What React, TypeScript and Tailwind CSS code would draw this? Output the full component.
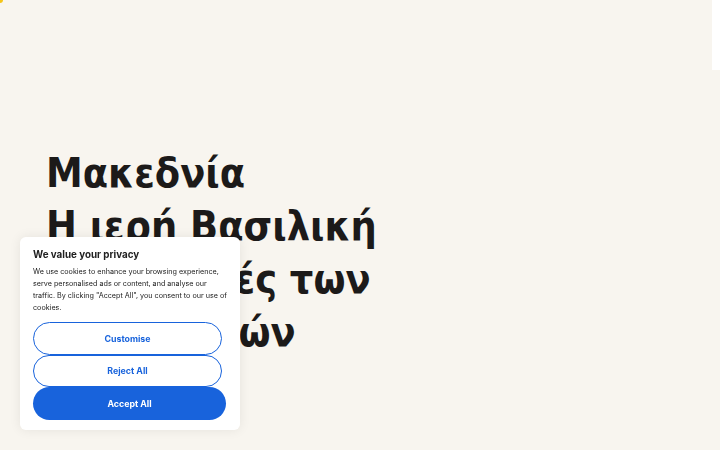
import { useState } from 'react';

const CookieBanner = () => {
    const [open, setOpen] = useState(true);
    if (!open) return null;

    return (
        <div className="fixed left-[20px] bottom-[20px] w-[220px] rounded-md bg-white px-[13px] pt-[11px] pb-[10px] shadow-[0_0_12px_rgba(0,0,0,0.08)] font-['Inter',sans-serif] text-[#212121]">
            <p className="text-[9.8px] font-bold leading-[14px]">We value your privacy</p>
            <p className="mt-[4px] text-[7.2px] leading-[12px]">
                We use cookies to enhance your browsing experience, serve personalised ads or content, and analyse our
                traffic. By clicking "Accept All", you consent to our use of cookies.
            </p>
            <div className="mt-[8px] flex flex-col">
                <button
                    onClick={() => setOpen(false)}
                    className="h-[33px] w-[189px] rounded-full border-[1.5px] border-[#1863dc] text-[8.8px] font-bold text-[#1863dc]"
                >
                    Customise
                </button>
                <button
                    onClick={() => setOpen(false)}
                    className="h-[32px] w-[189px] rounded-full border-[1.5px] border-[#1863dc] text-[8.8px] font-bold text-[#1863dc]"
                >
                    Reject All
                </button>
                <button
                    onClick={() => setOpen(false)}
                    className="h-[33px] w-[193px] rounded-full bg-[#1863dc] text-[8.8px] font-bold text-white"
                >
                    Accept All
                </button>
            </div>
        </div>
    );
};

export default function App() {
    return (
        <div className="relative min-h-screen overflow-hidden bg-[#f8f5ef]">
            <span className="absolute left-0 top-0 h-[3px] w-[3px] rounded-br-full bg-[#f5c518]" />
            <span className="absolute right-0 top-0 h-[70px] w-[8px] bg-white" />

            <h1 className="pl-[46px] pt-[147px] font-['DejaVu_Sans_Condensed','DejaVu_Sans',sans-serif] font-stretch-condensed text-[41px] font-bold leading-[53px] text-[#1c1a19]">
                Μακεδνία
                <br />
                Η ιερή Βασιλική
                <br />
                Οι απαρχές των
                <br />
                Ηρακλειδών
            </h1>

            <CookieBanner />
        </div>
    );
}
